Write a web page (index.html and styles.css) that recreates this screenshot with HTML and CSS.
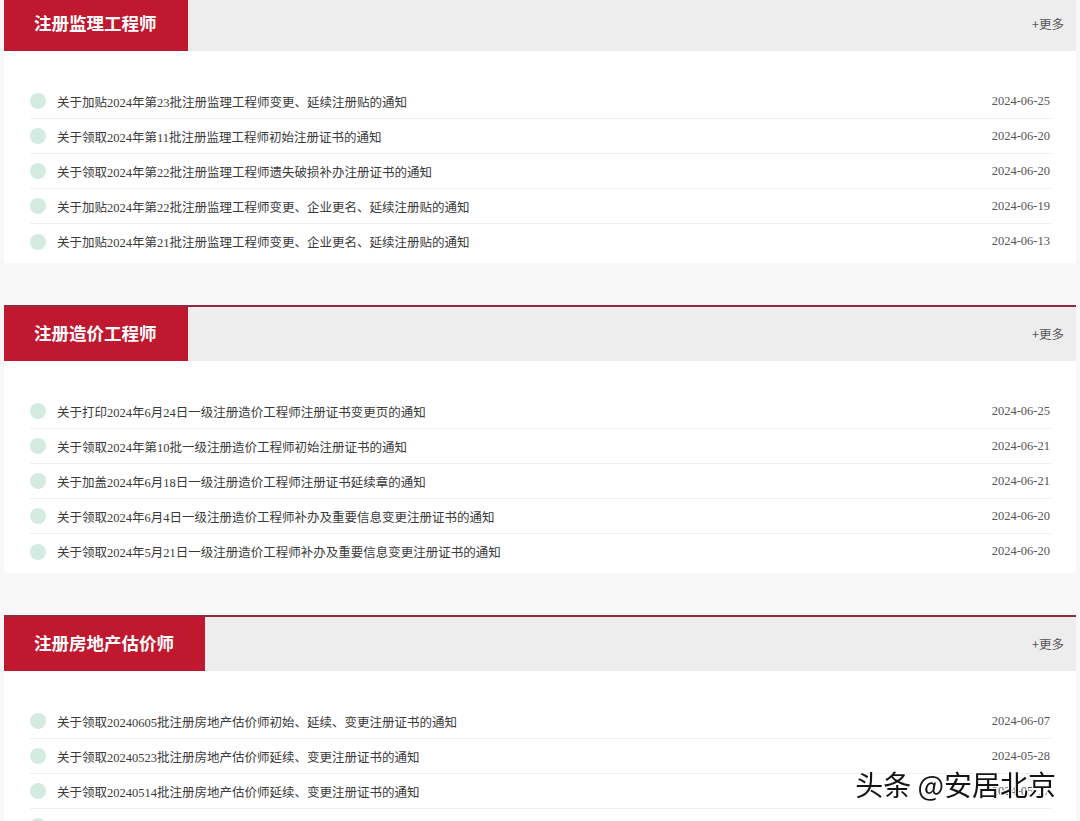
FILE: index.html
```html
<html>

<head>
    <meta charset="utf-8">
    <title>执业资格注册通知</title>
    <link rel="stylesheet" href="styles.css">
</head>

<body>
    <div class="page">

        <div class="section">
            <div class="section-head">
                <div class="tab">注册监理工程师</div>
                <a class="more" href="#">+更多</a>
            </div>
            <ul class="news">
                <li><span class="dot"></span><a href="#">关于加贴2024年第23批注册监理工程师变更、延续注册贴的通知</a><span class="date">2024-06-25</span></li>
                <li><span class="dot"></span><a href="#">关于领取2024年第11批注册监理工程师初始注册证书的通知</a><span class="date">2024-06-20</span></li>
                <li><span class="dot"></span><a href="#">关于领取2024年第22批注册监理工程师遗失破损补办注册证书的通知</a><span class="date">2024-06-20</span></li>
                <li><span class="dot"></span><a href="#">关于加贴2024年第22批注册监理工程师变更、企业更名、延续注册贴的通知</a><span class="date">2024-06-19</span></li>
                <li><span class="dot"></span><a href="#">关于加贴2024年第21批注册监理工程师变更、企业更名、延续注册贴的通知</a><span class="date">2024-06-13</span></li>
            </ul>
        </div>

        <div class="section">
            <div class="section-head">
                <div class="tab">注册造价工程师</div>
                <a class="more" href="#">+更多</a>
            </div>
            <ul class="news">
                <li><span class="dot"></span><a href="#">关于打印2024年6月24日一级注册造价工程师注册证书变更页的通知</a><span class="date">2024-06-25</span></li>
                <li><span class="dot"></span><a href="#">关于领取2024年第10批一级注册造价工程师初始注册证书的通知</a><span class="date">2024-06-21</span></li>
                <li><span class="dot"></span><a href="#">关于加盖2024年6月18日一级注册造价工程师注册证书延续章的通知</a><span class="date">2024-06-21</span></li>
                <li><span class="dot"></span><a href="#">关于领取2024年6月4日一级注册造价工程师补办及重要信息变更注册证书的通知</a><span class="date">2024-06-20</span></li>
                <li><span class="dot"></span><a href="#">关于领取2024年5月21日一级注册造价工程师补办及重要信息变更注册证书的通知</a><span class="date">2024-06-20</span></li>
            </ul>
        </div>

        <div class="section">
            <div class="section-head">
                <div class="tab">注册房地产估价师</div>
                <a class="more" href="#">+更多</a>
            </div>
            <ul class="news">
                <li><span class="dot"></span><a href="#">关于领取20240605批注册房地产估价师初始、延续、变更注册证书的通知</a><span class="date">2024-06-07</span></li>
                <li><span class="dot"></span><a href="#">关于领取20240523批注册房地产估价师延续、变更注册证书的通知</a><span class="date">2024-05-28</span></li>
                <li><span class="dot"></span><a href="#">关于领取20240514批注册房地产估价师延续、变更注册证书的通知</a><span class="date">2024-05-17</span></li>
                <li><span class="dot"></span><a href="#">关于领取20240429批注册房地产估价师初始、延续、变更注册证书的通知</a><span class="date">2024-05-06</span></li>
                <li><span class="dot"></span><a href="#">关于领取20240416批注册房地产估价师延续、变更注册证书的通知</a><span class="date">2024-04-19</span></li>
            </ul>
        </div>

    </div>

    <div class="watermark">头条 @安居北京</div>
</body>

</html>
```

FILE: styles.css
```css
body {
    margin: 0;
    background-color: #f8f8f8;
    font-family: "Liberation Serif", "Noto Sans CJK SC", serif;
}

a {
    text-decoration: none;
    color: inherit;
}

.page {
    padding: 0 4px;
    margin-top: -5px;
}

.section {
    background-color: #fff;
    border-top: 2px solid #922a3d;
    margin-bottom: 42px;
}

.section-head {
    display: flex;
    height: 54px;
    background-color: #ededed;
}

.tab {
    display: flex;
    align-items: center;
    padding: 0 31px 3px 30px;
    background-color: #c0192f;
    color: #fff;
    font-family: "Noto Sans CJK SC", sans-serif;
    font-weight: bold;
    font-size: 17.5px;
}

.more {
    margin-left: auto;
    align-self: center;
    padding-right: 12px;
    padding-bottom: 2px;
    font-family: "Noto Sans CJK SC", sans-serif;
    font-size: 12.5px;
    color: #555;
}

.news {
    list-style: none;
    margin: 0;
    padding: 33px 24px 4px 26px;
}

.news li {
    display: flex;
    align-items: center;
    height: 34px;
    border-bottom: 1px solid #f0f0f0;
    font-size: 12.5px;
    color: #3a3a3a;
}

.news li:last-child {
    border-bottom: none;
    height: 35px;
}

.dot {
    width: 16px;
    height: 16px;
    border-radius: 50%;
    background-color: #d3ebe0;
    margin-right: 11px;
    flex-shrink: 0;
}

.date {
    margin-left: auto;
    padding-right: 2px;
    color: #555;
}

.watermark {
    position: fixed;
    right: 24px;
    bottom: 17px;
    font-family: "Noto Sans CJK SC", sans-serif;
    font-size: 28px;
    color: #141414;
    text-shadow: 1px 1px 0 #fff, -1px -1px 0 #fff, 1px -1px 0 #fff, -1px 1px 0 #fff;
}
```
